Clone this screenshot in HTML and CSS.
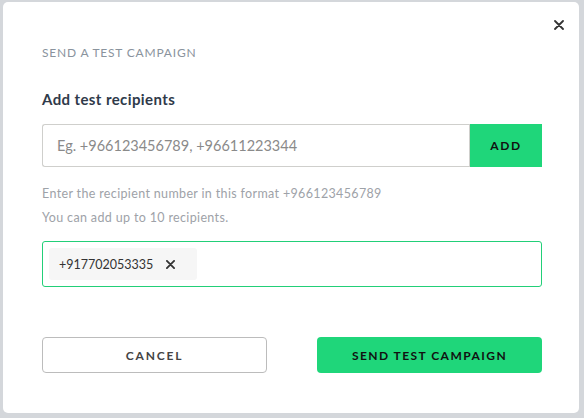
FILE: index.html
```html
<!DOCTYPE html>
<html>
<head>
<meta charset="utf-8">
<link rel="stylesheet" href="styles.css">
</head>
<body>
<div class="backdrop">
  <div class="modal">
    <button class="close" aria-label="Close">
      <svg width="10" height="10" viewBox="0 0 10 10"><path d="M1 1L9 9M9 1L1 9" stroke="#333" stroke-width="1.8" stroke-linecap="round"/></svg>
    </button>
    <div class="title">SEND A TEST CAMPAIGN</div>
    <div class="label">Add test recipients</div>
    <div class="input-row">
      <input class="input" type="text" placeholder="Eg. +966123456789, +96611223344">
      <button class="add">ADD</button>
    </div>
    <p class="help">Enter the recipient number in this format +966123456789</p>
    <p class="help help2">You can add up to 10 recipients.</p>
    <div class="chips">
      <span class="chip">+917702053335
        <svg class="chip-x" width="9" height="9" viewBox="0 0 10 10"><path d="M1 1L9 9M9 1L1 9" stroke="#333" stroke-width="2" stroke-linecap="round"/></svg>
      </span>
    </div>
    <div class="actions">
      <button class="btn cancel">CANCEL</button>
      <button class="btn send">SEND TEST CAMPAIGN</button>
    </div>
  </div>
</div>
</body>
</html>
```
FILE: styles.css
```css
* { box-sizing: border-box; }
html, body { margin: 0; padding: 0; }
body {
  width: 584px;
  height: 418px;
  background: #d4d7db;
  font-family: "Lato", "Open Sans", sans-serif;
  overflow: hidden;
}
.backdrop {
  padding: 2px 5px 5px 3px;
  height: 418px;
}
.modal {
  position: relative;
  background: #fff;
  border-radius: 5px;
  height: 411px;
  padding: 44px 37px 0 39px;
}
.close {
  position: absolute;
  top: 18px;
  right: 15px;
  border: 0;
  background: none;
  padding: 0;
  width: 10px;
  height: 10px;
  line-height: 0;
}
.title {
  font-size: 12px;
  letter-spacing: 0.8px;
  color: #8a939d;
  line-height: 14px;
}
.label {
  margin-top: 30px;
  font-size: 15px;
  font-weight: 700;
  color: #2f3a4a;
  line-height: 18px;
  letter-spacing: 0.4px;
}
.input-row {
  margin-top: 16px;
  display: flex;
  height: 43px;
}
.input {
  flex: 1;
  border: 1px solid #cfcfcc;
  border-right: 0;
  border-radius: 3px 0 0 3px;
  padding: 0 14px;
  font-family: inherit;
  font-size: 14.5px;
  letter-spacing: 0;
  outline: none;
}
.input::placeholder { color: #8a8a8a; }
.add {
  width: 73px;
  border: 0;
  border-left: 1px solid #cfcfcc;
  background: #1fd67a;
  font-family: inherit;
  font-size: 12px;
  font-weight: 700;
  letter-spacing: 1.6px;
  color: #111;
}
.help {
  margin: 19px 0 0;
  font-size: 12.5px;
  color: #9ea2a8;
  line-height: 15px;
  letter-spacing: 0.35px;
}
.help2 { margin-top: 9px; }
.chips {
  margin-top: 16px;
  height: 46px;
  border: 1px solid #22cf78;
  border-radius: 3px;
  padding: 6px;
  display: flex;
}
.chip {
  display: flex;
  align-items: center;
  gap: 13px;
  width: 148px;
  height: 32px;
  padding: 0 10px;
  background: #f6f6f6;
  border-radius: 3px;
  font-size: 12.5px;
  color: #333;
  letter-spacing: 0;
}
.actions {
  margin-top: 50px;
  display: flex;
  justify-content: space-between;
}
.btn {
  width: 225px;
  height: 36px;
  border-radius: 4px;
  font-family: inherit;
  font-size: 12px;
  font-weight: 700;
  letter-spacing: 1.8px;
}
.cancel {
  background: #fff;
  border: 1px solid #bcbcbc;
  color: #444;
}
.send {
  background: #1fd67a;
  border: 0;
  color: #111;
  letter-spacing: 1.45px;
}
```
